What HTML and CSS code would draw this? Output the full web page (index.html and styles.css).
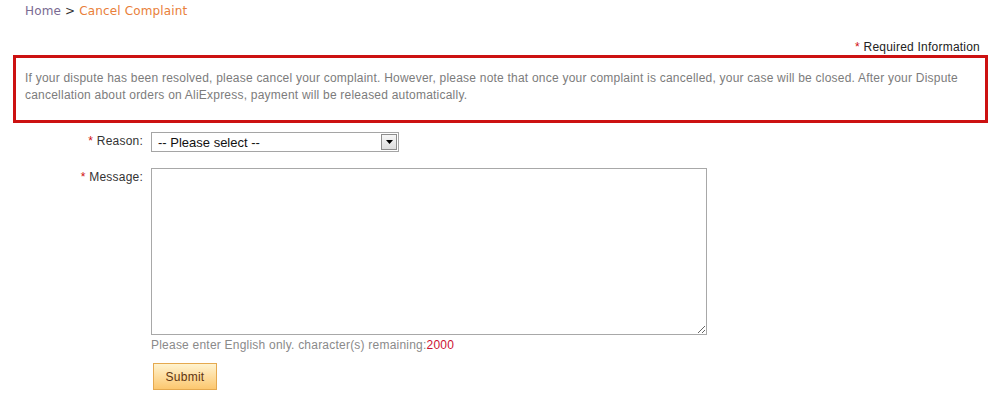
FILE: index.html
```html
<!DOCTYPE html>
<html>
<head>
<meta charset="utf-8">
<link rel="stylesheet" href="styles.css">
</head>
<body>
<div class="crumb"><a class="home">Home</a> <span class="sep">&gt;</span> <span class="current">Cancel Complaint</span></div>
<div class="req"><span class="star">*</span> Required Information</div>
<div class="notice">If your dispute has been resolved, please cancel your complaint. However, please note that once your complaint is cancelled, your case will be closed. After your Dispute cancellation about orders on AliExpress, payment will be released automatically.</div>
<div class="form">
  <div class="label"><span class="star">*</span> Reason:</div>
  <div class="field">
    <div class="select">
      <span class="select-text">-- Please select --</span>
      <span class="arrow"><svg width="7" height="4" viewBox="0 0 7 4"><path d="M0 0H7L3.5 4Z" fill="#000"/></svg></span>
    </div>
  </div>
  <div class="label"><span class="star">*</span> Message:</div>
  <div class="field">
    <textarea class="message"></textarea>
    <div class="hint">Please enter English only. character(s) remaining:<span class="count">2000</span></div>
    <button class="submit">Submit</button>
  </div>
</div>
</body>
</html>
```
FILE: styles.css
```css
html, body {
  margin: 0;
  padding: 0;
  background: #fff;
}
body {
  font-family: "Liberation Sans", Arial, sans-serif;
  font-size: 12px;
  letter-spacing: 0.22px;
  color: #333;
}
.crumb {
  font-family: "DejaVu Sans", Verdana, sans-serif;
  font-size: 12px;
  letter-spacing: 0.15px;
  line-height: 16px;
  padding: 3px 0 0 25px;
  height: 17px;
}
.home { color: #7a6a92; }
.sep { color: #333; }
.current { color: #e9803a; }
.req {
  text-align: right;
  padding-right: 14px;
  margin-top: 20px;
  line-height: 14px;
  color: #222;
}
.star { color: #d01010; }
.notice {
  margin: 1px 6px 0 13px;
  border: 3px solid #cc1111;
  padding: 12px 10px 16px 9px;
  color: #7c7c7c;
  line-height: 17px;
}
.form {
  display: grid;
  grid-template-columns: 143px auto;
  column-gap: 8px;
  row-gap: 16px;
  margin-top: 9px;
  align-items: start;
}
.label {
  text-align: right;
  line-height: 19px;
  color: #333;
}
.field {
  display: flex;
  flex-direction: column;
  align-items: flex-start;
}
.select {
  box-sizing: border-box;
  width: 248px;
  height: 20px;
  border: 1px solid #a5a5a5;
  display: flex;
  align-items: center;
  justify-content: space-between;
  padding: 0 1px 0 6px;
  background: #fff;
}
.select-text {
  font-size: 13px;
  letter-spacing: 0;
  color: #111;
}
.arrow {
  box-sizing: border-box;
  width: 16px;
  height: 16px;
  border: 1px solid #8d8d8d;
  background: linear-gradient(#f6f6f6, #dedede);
  display: flex;
  align-items: center;
  justify-content: center;
}
.message {
  box-sizing: border-box;
  width: 556px;
  height: 167px;
  margin: 0;
  border: 1px solid #a8a8a8;
  padding: 2px;
  font-family: "Liberation Sans", Arial, sans-serif;
  font-size: 12px;
}
.hint {
  color: #8a8a8a;
  line-height: 17px;
  margin-top: 2px;
}
.count { color: #cc1133; }
.submit {
  margin: 9px 0 0 2px;
  box-sizing: border-box;
  width: 64px;
  height: 27px;
  border: 1px solid #e5a94f;
  background: linear-gradient(#fff3cf, #fcc76f);
  font-family: "Liberation Sans", Arial, sans-serif;
  font-size: 12px;
  letter-spacing: 0.25px;
  color: #5e3410;
  padding: 0;
}
```
